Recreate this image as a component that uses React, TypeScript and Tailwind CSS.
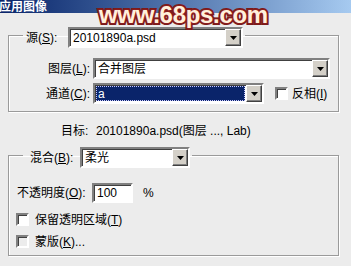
import React from "react";

function Arrow() {
  return (
    <div className="flex w-[16px] shrink-0 items-center justify-center border border-t-white border-l-white border-b-[#404040] border-r-[#404040] bg-[#d4d0c8] shadow-[inset_-1px_-1px_0_#808080]">
      <svg width="7" height="4" viewBox="0 0 7 4">
        <path d="M0 0H7L3.5 4Z" fill="#000" />
      </svg>
    </div>
  );
}

function Select({
  className,
  value,
  highlighted,
}: {
  className: string;
  value: string;
  highlighted?: boolean;
}) {
  return (
    <div
      className={
        "flex h-[21px] shrink-0 border-2 border-t-[#808080] border-l-[#808080] border-b-white border-r-white bg-white shadow-[inset_1px_1px_0_#404040] " +
        className
      }
    >
      {highlighted ? (
        <div className="flex flex-1 p-[1px]">
          <div className="flex flex-1 items-center border border-dotted border-[#c8c8ff] bg-[#0a246a] pl-[1px] text-white">
            {value}
          </div>
        </div>
      ) : (
        <div className="flex flex-1 items-center pl-[3px]">{value}</div>
      )}
      <Arrow />
    </div>
  );
}

function Check({ disabled }: { disabled?: boolean }) {
  return (
    <div
      className={
        "h-[13px] w-[13px] shrink-0 border-2 border-t-[#808080] border-l-[#808080] border-b-white border-r-white shadow-[inset_1px_1px_0_#404040] " +
        (disabled ? "bg-[#ececec]" : "bg-white")
      }
    />
  );
}

export default function App() {
  return (
    <div className="relative h-[266px] w-[351px] overflow-hidden bg-[#ececec] font-['Liberation_Sans','Noto_Sans_CJK_SC',sans-serif] text-[12px] leading-none text-black">
      {/* title bar */}
      <div className="flex h-[13px] items-center bg-gradient-to-r from-[#0a246a] to-[#a6caf0] pl-[0px] text-[12px] font-bold text-white">
        <span className="-ml-[1px]">应用图像</span>
      </div>

      {/* group 1 */}
      <fieldset className="ml-[8px] mt-[9px] w-[331px] border border-[#9a9a9a] pb-[7px] shadow-[inset_1px_1px_0_#fff,1px_1px_0_#fff]">
        <legend className="ml-[14px] flex items-center pl-[3px] pr-[2px] pt-[5px]">
          <span className="w-[42px]">
            源(<u>S</u>):
          </span>
          <Select className="w-[175px]" value="20101890a.psd" />
        </legend>
        <div className="mt-[10px] flex items-center">
          <div className="w-[84px] pr-[3px] text-right">
            图层(<u>L</u>):
          </div>
          <Select className="w-[237px]" value="合并图层" />
        </div>
        <div className="mt-[4px] flex items-center">
          <div className="w-[84px] pr-[3px] text-right">
            通道(<u>C</u>):
          </div>
          <Select className="w-[171px]" value="a" highlighted />
          <div className="ml-[11px]">
            <Check />
          </div>
          <span className="ml-[4px]">
            反相(<u>I</u>)
          </span>
        </div>
      </fieldset>

      {/* target */}
      <div className="mt-[13px] flex h-[12px] items-center pl-[61px]">
        <span className="w-[35px]">目标:</span>
        <span>20101890a.psd(图层 ..., Lab)</span>
      </div>

      {/* group 2 */}
      <fieldset className="ml-[8px] mt-[5px] w-[331px] border border-[#9a9a9a] pb-[7px] shadow-[inset_1px_1px_0_#fff,1px_1px_0_#fff]">
        <legend className="ml-[14px] flex items-center pl-[7px] pr-[2px] pt-[5px]">
          <span className="w-[50px]">
            混合(<u>B</u>):
          </span>
          <Select className="w-[110px]" value="柔光" />
        </legend>
        <div className="mt-[15px] flex items-center pl-[8px]">
          <span className="w-[75px]">
            不透明度(<u>O</u>):
          </span>
          <div className="flex h-[20px] w-[41px] items-center border-2 border-t-[#808080] border-l-[#808080] border-b-white border-r-white bg-white pl-[3px] shadow-[inset_1px_1px_0_#404040]">
            100
          </div>
          <span className="ml-[10px]">%</span>
        </div>
        <div className="mt-[10px] flex items-center pl-[7px]">
          <Check />
          <span className="ml-[6px]">
            保留透明区域(<u>T</u>)
          </span>
        </div>
        <div className="mt-[9px] flex items-center pl-[7px]">
          <Check disabled />
          <span className="ml-[6px]">
            蒙版(<u>K</u>)...
          </span>
        </div>
      </fieldset>

      {/* watermark */}
      <div className="pointer-events-none absolute left-[99px] top-[1px] font-['Liberation_Sans',sans-serif] text-[24px] font-bold leading-[28px] tracking-[-0.3px] text-[#fff1dc] [paint-order:stroke_fill] [-webkit-text-stroke:4px_#7a1a1a] [text-shadow:0_0_2px_#c03030]">
        www.68ps.com
      </div>
    </div>
  );
}
